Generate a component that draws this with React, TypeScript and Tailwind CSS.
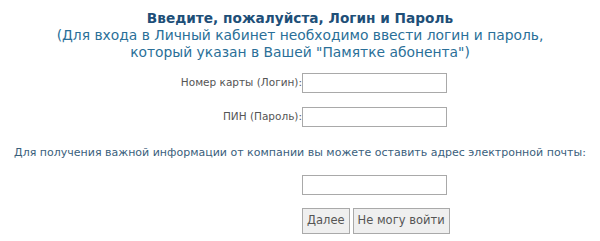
import React from 'react';

export default function App() {
  const font = { fontFamily: '"DejaVu Sans", Verdana, sans-serif' };
  return (
    <div className="w-[600px] h-[241px] bg-white overflow-hidden" style={font}>
      <div className="pt-[10px] text-center">
        <h1 className="text-[13.7px] font-bold leading-[17px] text-[#1e4f78]">
          Введите, пожалуйста, Логин и Пароль
        </h1>
        <p className="text-[13.85px] leading-[17px] text-[#2a6f98]">
          (Для входа в Личный кабинет необходимо ввести логин и пароль,
          <br />
          который указан в Вашей "Памятке абонента")
        </p>
      </div>

      <div className="mt-[12px] grid grid-cols-[302px_1fr] items-center gap-y-[14px]">
        <label className="text-right text-[10.5px] text-[#555]">Номер карты (Логин):</label>
        <input type="text" className="w-[145px] h-[20px] border border-[#a9a9a9] bg-white" />
        <label className="text-right text-[10.5px] text-[#555]">ПИН (Пароль):</label>
        <input type="password" className="w-[145px] h-[20px] border border-[#a9a9a9] bg-white" />
      </div>

      <p className="mt-[18px] text-center text-[11px] text-[#3a607c]">
        Для получения важной информации от компании вы можете оставить адрес электронной почты:
      </p>

      <div className="mt-[13px] grid grid-cols-[302px_1fr]">
        <div />
        <div className="flex flex-col gap-[13px]">
          <input type="email" className="w-[145px] h-[20px] border border-[#a9a9a9] bg-white" />
          <div className="flex gap-[3px]">
            <button className="h-[26px] px-[4px] border border-[#a9a9a9] bg-[#efefef] text-[11.5px] text-[#555]">
              Далее
            </button>
            <button className="h-[26px] px-[4px] border border-[#a9a9a9] bg-[#efefef] text-[11.5px] text-[#555]">
              Не могу войти
            </button>
          </div>
        </div>
      </div>
    </div>
  );
}
